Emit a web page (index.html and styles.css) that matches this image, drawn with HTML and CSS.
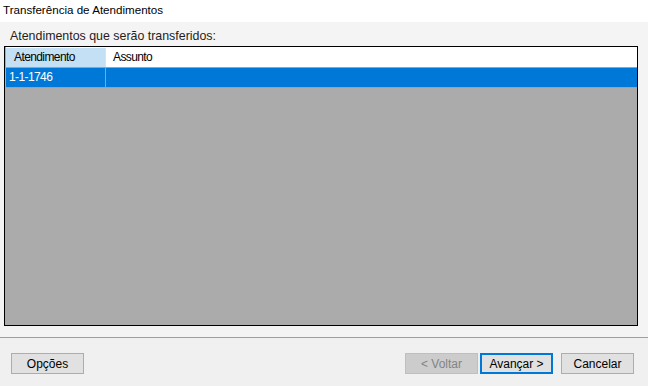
FILE: index.html
```html
<!DOCTYPE html>
<html lang="pt">
<head>
  <meta charset="UTF-8">
  <title>Transferência de Atendimentos</title>
  <link rel="stylesheet" href="styles.css">
</head>
<body>
  <div class="window">
    <div class="title">Transferência de Atendimentos</div>

    <div class="panel">
      <div class="caption">Atendimentos que serão transferidos:</div>
      <div class="grid">
        <div class="grid-row grid-head">
          <div class="cell col-at sorted">Atendimento</div>
          <div class="cell col-as">Assunto</div>
        </div>
        <div class="grid-row selected">
          <div class="cell col-at">1-1-1746</div>
          <div class="cell col-as"></div>
        </div>
      </div>
    </div>

    <div class="footer">
      <button class="btn">Opções</button>
      <div class="nav">
        <button class="btn" disabled>&lt; Voltar</button>
        <button class="btn default">Avançar &gt;</button>
        <button class="btn cancel">Cancelar</button>
      </div>
    </div>
  </div>
</body>
</html>
```

FILE: styles.css
```css
body {
  margin: 0;
  font-family: "Liberation Sans", Arial, sans-serif;
  font-size: 12px;
  color: #000;
  background: #f0f0f0;
}
.window {
  width: 648px;
  height: 386px;
  display: flex;
  flex-direction: column;
}
.title {
  height: 22px;
  line-height: 20px;
  padding-left: 3px;
  font-size: 11.6px;
  background: #fff;
}
.panel {
  height: 316px;
  box-sizing: border-box;
  padding: 5px 10px 0 4px;
  background: #f4f4f4;
  border-bottom: 1px solid #a0a0a0;
}
.caption {
  font-size: 12.4px;
  line-height: 19px;
  padding-left: 6px;
  color: #1e1e1e;
}
.grid {
  height: 280px;
  box-sizing: border-box;
  border: 1px solid #000;
  background: #ababab;
  padding: 0 0 0 1px;
}
.grid-row {
  display: flex;
  height: 20px;
  border-bottom: 1px solid #a0a0a0;
  box-sizing: border-box;
}
.grid-head {
  background: #fff;
  height: 21px;
  padding-top: 1px;
}
.cell {
  line-height: 19px;
  letter-spacing: -0.6px;
  box-sizing: border-box;
  white-space: nowrap;
}
.col-at {
  width: 100px;
  border-right: 1px solid #a0a0a0;
}
.col-as {
  flex: 1;
}
.grid-head .col-at {
  padding-left: 8px;
}
.grid-head .col-as {
  padding-left: 7px;
}
.grid-head .sorted {
  background: #c4e0f5;
  border-right-color: #e0e0e0;
}
.selected {
  background: #0078d7;
  color: #fff;
}
.selected .col-at {
  padding-left: 3px;
}
.footer {
  flex: 1;
  display: flex;
  justify-content: space-between;
  align-items: flex-start;
  padding: 15px 14px 0 11px;
}
.nav {
  display: flex;
}
.btn {
  width: 73px;
  height: 21px;
  padding: 0;
  font-family: inherit;
  font-size: 12px;
  color: #000;
  background: #e1e1e1;
  border: 1px solid #adadad;
  box-sizing: border-box;
}
.btn:disabled {
  background: #cccccc;
  border-color: #bfbfbf;
  color: #838383;
}
.btn.default {
  margin-left: 2px;
  border: 2px solid #0078d7;
}
.btn.cancel {
  margin-left: 8px;
}
```
